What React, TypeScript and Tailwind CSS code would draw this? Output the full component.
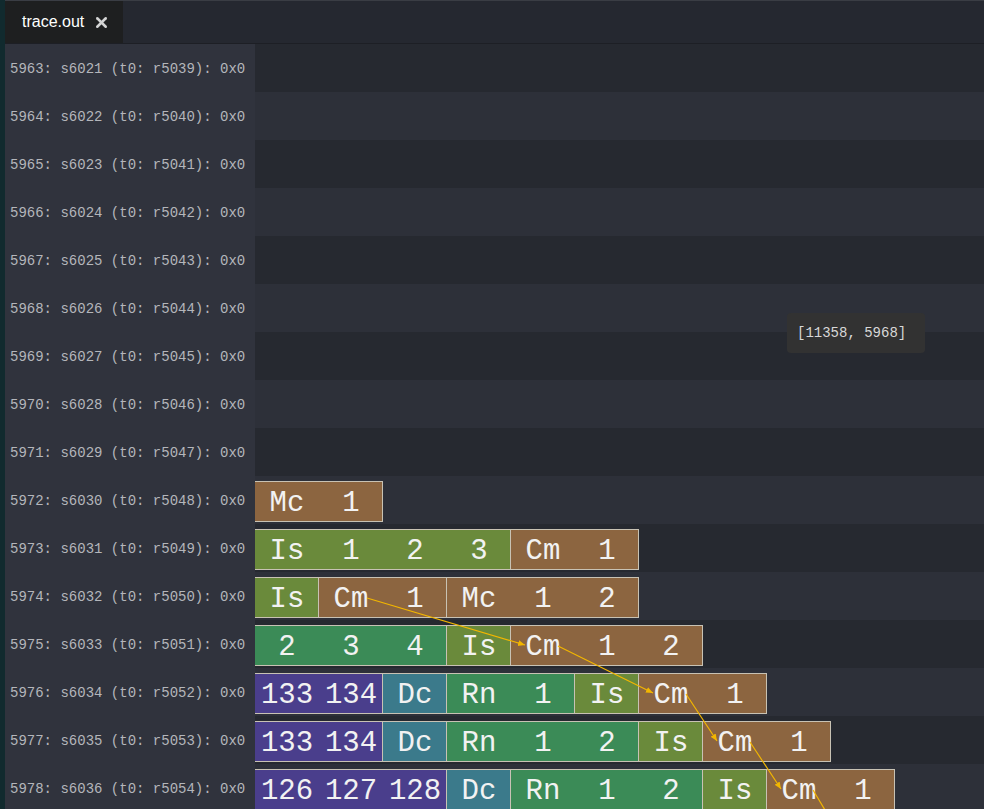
import { X } from "lucide-react";

type Group = { cells: string[]; color: string };

const BROWN = "bg-[#8c6540]";
const OLIVE = "bg-[#6a8a3b]";
const GREEN = "bg-[#3b8b57]";
const TEAL = "bg-[#3b7a8b]";
const PURPLE = "bg-[#4a3e8c]";

const ROWS: Record<number, Group[]> = {
  5972: [{ cells: ["Mc", "1"], color: BROWN }],
  5973: [
    { cells: ["Is", "1", "2", "3"], color: OLIVE },
    { cells: ["Cm", "1"], color: BROWN },
  ],
  5974: [
    { cells: ["Is"], color: OLIVE },
    { cells: ["Cm", "1"], color: BROWN },
    { cells: ["Mc", "1", "2"], color: BROWN },
  ],
  5975: [
    { cells: ["2", "3", "4"], color: GREEN },
    { cells: ["Is"], color: OLIVE },
    { cells: ["Cm", "1", "2"], color: BROWN },
  ],
  5976: [
    { cells: ["133", "134"], color: PURPLE },
    { cells: ["Dc"], color: TEAL },
    { cells: ["Rn", "1"], color: GREEN },
    { cells: ["Is"], color: OLIVE },
    { cells: ["Cm", "1"], color: BROWN },
  ],
  5977: [
    { cells: ["133", "134"], color: PURPLE },
    { cells: ["Dc"], color: TEAL },
    { cells: ["Rn", "1", "2"], color: GREEN },
    { cells: ["Is"], color: OLIVE },
    { cells: ["Cm", "1"], color: BROWN },
  ],
  5978: [
    { cells: ["126", "127", "128"], color: PURPLE },
    { cells: ["Dc"], color: TEAL },
    { cells: ["Rn", "1", "2"], color: GREEN },
    { cells: ["Is"], color: OLIVE },
    { cells: ["Cm", "1"], color: BROWN },
  ],
};

const IDS = Array.from({ length: 16 }, (_, i) => 5963 + i);

// arrows between consecutive commit stages (page coords)
const ARROWS: [number, number, number, number][] = [
  [367, 598, 525, 645],
  [558, 646, 653, 693],
  [686, 694, 717, 741],
  [750, 742, 781, 789],
  [813, 790, 840, 835],
];

function Row({ id, index }: { id: number; index: number }) {
  const groups = ROWS[id] ?? [];
  return (
    <div className={`flex h-[48px] ${index % 2 === 0 ? "bg-[#262930]" : "bg-[#2d3039]"}`}>
      <div className="w-[250px] shrink-0 bg-[#30333d] flex items-center pl-[5px] pt-[2px] text-[14px] text-[#b4b6bb] font-['Liberation_Mono',monospace] whitespace-nowrap">
        {id}: s{id + 58} (t0: r{id - 924}): 0x0
      </div>
      <div className="flex pt-[5px]">
        {groups.map((g, i) => (
          <div
            key={i}
            className={`flex h-[41px] border-y border-r border-[#c8c2b4] ${g.color}`}
            style={{ width: g.cells.length * 64 }}
          >
            {g.cells.map((c, j) => (
              <span
                key={j}
                className="w-[64px] shrink-0 flex items-center justify-center pt-[4px] text-[29px] text-[#f2f2f2] font-['Liberation_Mono',monospace] leading-none"
              >
                {c}
              </span>
            ))}
          </div>
        ))}
      </div>
    </div>
  );
}

export default function App() {
  return (
    <div className="relative w-[984px] h-[809px] overflow-hidden flex bg-[#262930]">
      <div className="w-[5px] shrink-0 bg-[#112a2e]" />
      <div className="flex-1 flex flex-col">
        {/* Tab bar */}
        <div className="h-[44px] shrink-0 flex bg-[#252830] border-t border-t-[#3a3d44] border-b border-b-[#1d1f25]">
          <div className="w-[118px] flex items-center gap-[9px] pl-[17px] bg-[#1e1f20] font-['Liberation_Sans',Arial,sans-serif] text-[16px] text-white">
            <span>trace.out</span>
            <X size={17} strokeWidth={3.5} className="text-[#d4d4d4]" />
          </div>
        </div>
        {/* Rows */}
        <div className="flex flex-col">
          {IDS.map((id, i) => (
            <Row key={id} id={id} index={i} />
          ))}
        </div>
      </div>

      {/* Dependency arrows */}
      <svg className="absolute left-0 top-0 pointer-events-none" width={984} height={809}>
        <defs>
          <marker
            id="head"
            markerUnits="userSpaceOnUse"
            markerWidth="8"
            markerHeight="8"
            refX="7"
            refY="4"
            orient="auto"
          >
            <path d="M0,1 L7,4 L0,7 Z" fill="#f2b600" />
          </marker>
        </defs>
        {ARROWS.map(([x1, y1, x2, y2], i) => (
          <line
            key={i}
            x1={x1}
            y1={y1}
            x2={x2}
            y2={y2}
            stroke="#f2b600"
            strokeWidth={1.2}
            markerEnd="url(#head)"
          />
        ))}
      </svg>

      {/* Hover tooltip */}
      <div className="absolute left-[787px] top-[313px] w-[138px] h-[40px] rounded bg-[#323232] flex items-center pl-[10px] text-[14px] text-[#d8d8d8] font-['Liberation_Mono',monospace]">
        [11358, 5968]
      </div>
    </div>
  );
}
